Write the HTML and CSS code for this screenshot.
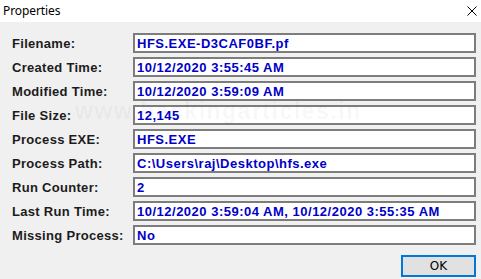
FILE: index.html
```html
<!DOCTYPE html>
<html>
<head>
<meta charset="utf-8">
<link rel="stylesheet" href="styles.css">
</head>
<body>
<div class="window">
  <div class="titlebar">
    <span class="title">Properties</span>
    <svg class="close" width="10" height="10" viewBox="0 0 10 10"><path d="M0.5 0.5 L9.5 9.5 M9.5 0.5 L0.5 9.5" stroke="#000" stroke-width="1" fill="none"/></svg>
  </div>
  <div class="content">
    <div class="grid">
      <div class="label">Filename:</div><div class="field">HFS.EXE-D3CAF0BF.pf</div>
      <div class="label">Created Time:</div><div class="field">10/12/2020 3:55:45 AM</div>
      <div class="label">Modified Time:</div><div class="field">10/12/2020 3:59:09 AM</div>
      <div class="label">File Size:</div><div class="field">12,145</div>
      <div class="label">Process EXE:</div><div class="field">HFS.EXE</div>
      <div class="label">Process Path:</div><div class="field">C:\Users\raj\Desktop\hfs.exe</div>
      <div class="label">Run Counter:</div><div class="field">2</div>
      <div class="label">Last Run Time:</div><div class="field">10/12/2020 3:59:04 AM, 10/12/2020 3:55:35 AM</div>
      <div class="label">Missing Process:</div><div class="field">No</div>
    </div>
    <div class="buttons">
      <button class="ok">OK</button>
    </div>
    <div class="watermark">www.hackingarticles.in</div>
  </div>
</div>
</body>
</html>
```
FILE: styles.css
```css
html, body {
  margin: 0;
  padding: 0;
  width: 481px;
  height: 279px;
  overflow: hidden;
  background: #f0f0f0;
}
.window {
  width: 481px;
  height: 279px;
  display: flex;
  flex-direction: column;
}
.titlebar {
  height: 22px;
  background: #ffffff;
  display: flex;
  align-items: center;
  justify-content: space-between;
  padding: 0 4px 2px 3px;
  box-sizing: border-box;
}
.title {
  font-family: "Noto Sans", "Open Sans", sans-serif;
  font-size: 12px;
  color: #000;
  letter-spacing: -0.1px;
}
.close {
  display: block;
  margin-top: 2px;
}
.content {
  position: relative;
  flex: 1;
  background: #f0f0f0;
  padding: 11px 5px 0 12px;
}
.grid {
  display: grid;
  grid-template-columns: 121px 343px;
  grid-auto-rows: 20px;
  row-gap: 4px;
}
.label {
  font-family: "Liberation Sans", Arial, sans-serif;
  font-weight: bold;
  font-size: 13px;
  letter-spacing: 0.3px;
  color: #1c1c1c;
  display: flex;
  align-items: center;
  padding-top: 1px;
}
.field {
  box-sizing: border-box;
  border: 2px solid #7d7d7d;
  background: #ffffff;
  font-family: "Liberation Sans", Arial, sans-serif;
  font-weight: bold;
  font-size: 13px;
  letter-spacing: 0.5px;
  color: #0000c8;
  display: flex;
  align-items: center;
  padding: 1px 0 0 2px;
  white-space: nowrap;
}
.buttons {
  display: flex;
  justify-content: flex-end;
  margin-top: 10px;
}
.ok {
  width: 75px;
  height: 22px;
  box-sizing: border-box;
  border: 2px solid #0078d7;
  background: #e1e1e1;
  font-family: "DejaVu Sans", sans-serif;
  font-size: 12px;
  color: #000;
  padding: 0;
  margin: 0;
}
.watermark {
  position: absolute;
  left: 75px;
  top: 76px;
  font-family: "Liberation Sans", Arial, sans-serif;
  font-weight: bold;
  font-size: 23px;
  line-height: 27px;
  color: rgba(0, 0, 0, 0.04);
  letter-spacing: 1.5px;
  pointer-events: none;
}
```
